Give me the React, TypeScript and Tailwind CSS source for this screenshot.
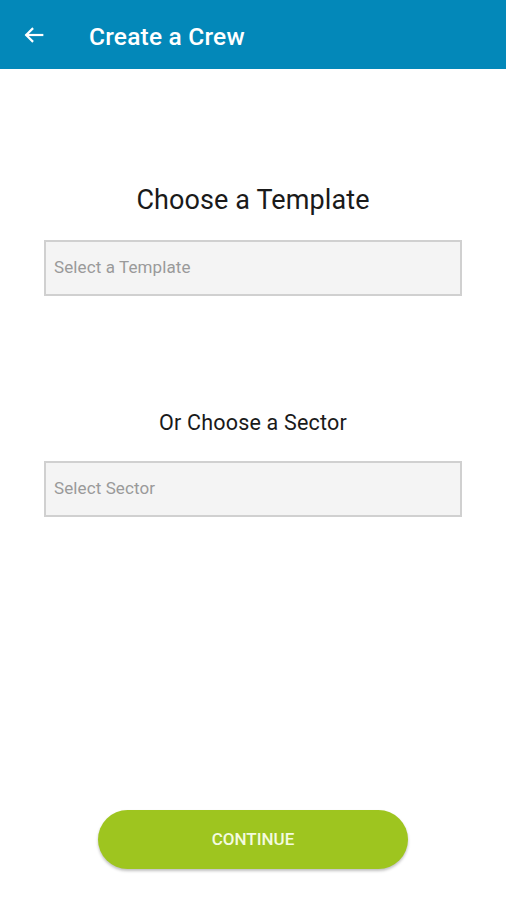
import React from "react";

export default function App() {
  return (
    <div className="w-[506px] h-[900px] bg-white flex flex-col" style={{ fontFamily: "Roboto, 'Noto Sans', sans-serif" }}>
      <div className="h-[69px] bg-[#0388b9] flex items-center shrink-0">
        <svg className="ml-[23px]" width="22" height="22" viewBox="0 0 24 24" fill="none" stroke="white" strokeWidth="2.4" strokeLinecap="square">
          <path d="M21 12H4" />
          <path d="M11 4.5L3.5 12L11 19.5" strokeLinecap="butt" strokeLinejoin="miter" />
        </svg>
        <span className="ml-[44px] mt-[5px] text-white text-[24.5px] font-medium tracking-[0.2px]">Create a Crew</span>
      </div>
      <div className="flex flex-col items-center pt-[114px]">
        <div className="text-[27px] text-[#1a1a1a] leading-[34px] tracking-[0.1px]">Choose a Template</div>
        <div className="mt-[23px] w-[418px] h-[56px] bg-[#f4f4f4] border-2 border-[#d0d0d0] flex items-center px-[8px]">
          <span className="text-[17px] text-[#9a9a9a] tracking-[0.1px]">Select a Template</span>
        </div>
        <div className="mt-[112px] text-[21.5px] text-[#1a1a1a] leading-[30px] tracking-[0.2px]">Or Choose a Sector</div>
        <div className="mt-[23px] w-[418px] h-[56px] bg-[#f4f4f4] border-2 border-[#d0d0d0] flex items-center px-[8px]">
          <span className="text-[17px] text-[#9a9a9a] tracking-[0.1px]">Select Sector</span>
        </div>
      </div>
      <div className="flex-1" />
      <div className="flex justify-center pb-[31px]">
        <div className="w-[310px] h-[59px] rounded-full bg-[#9ec51f] shadow-[0_2px_3px_rgba(0,0,0,0.25)] flex items-center justify-center">
          <span className="text-[#f4fbe0] text-[17px] font-medium">CONTINUE</span>
        </div>
      </div>
    </div>
  );
}
